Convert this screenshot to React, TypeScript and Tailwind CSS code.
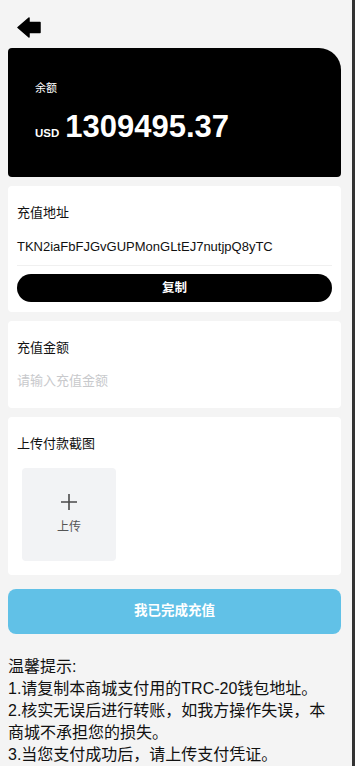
import React, { useState } from "react";

const font = { fontFamily: '"Liberation Sans", "Noto Sans CJK SC", sans-serif' };

function BackArrow() {
  return (
    <svg width="24" height="21" viewBox="0 0 24 21">
      <path
        d="M1 10.5 L12 1 L12 5.5 L23 5.5 L23 15.5 L12 15.5 L12 20 Z"
        fill="#000"
        stroke="#000"
        strokeWidth="1.5"
        strokeLinejoin="round"
      />
    </svg>
  );
}

export default function App() {
  const [amount, setAmount] = useState("");
  const address = "TKN2iaFbFJGvGUPMonGLtEJ7nutjpQ8yTC";

  return (
    <div className="flex min-h-[766px] bg-[#f4f4f4]" style={font}>
      <div className="flex-1 pl-2 pr-[3px]">
        <div className="h-12 flex items-center pl-[9px] pt-[6px]">
          <BackArrow />
        </div>

        {/* balance */}
        <div className="w-[333px] h-[129px] bg-black rounded-[4px] rounded-tr-[22px] pl-[27px] pt-[32px] text-white">
          <div className="text-[11px] leading-[16px]">余额</div>
          <div className="flex items-baseline mt-[14px]">
            <span className="text-[11.5px] font-bold mr-[6px]">USD</span>
            <span className="text-[31px] font-bold leading-[34px]">1309495.37</span>
          </div>
        </div>

        {/* address */}
        <div className="w-[333px] mt-[9px] bg-white rounded-[4px] px-[9px] pt-[18px] pb-[10px]">
          <div className="text-[13px] leading-[18px] text-[#111]">充值地址</div>
          <div className="mt-[16px] text-[13px] leading-[18px] text-[#111] pb-[9px] border-b border-[#f0f0f0]">
            {address}
          </div>
          <button className="mt-2 w-full h-[28px] bg-black rounded-full text-white text-[12.5px] font-bold">
            复制
          </button>
        </div>

        {/* amount */}
        <div className="w-[333px] mt-[9px] bg-white rounded-[4px] px-[9px] pt-[18px] pb-[18px]">
          <div className="text-[13px] leading-[18px] text-[#111]">充值金额</div>
          <input
            value={amount}
            onChange={(e) => setAmount(e.target.value)}
            placeholder="请输入充值金额"
            className="mt-[15px] block w-full h-[18px] text-[13px] outline-none placeholder-[#c8c9cc]"
          />
        </div>

        {/* upload */}
        <div className="w-[333px] mt-[9px] bg-white rounded-[4px] px-[9px] pt-[18px] pb-[14px]">
          <div className="text-[13px] leading-[18px] text-[#111]">上传付款截图</div>
          <div className="mt-[15px] ml-[5px] w-[94px] h-[93px] bg-[#f2f3f5] rounded-[4px] flex flex-col items-center pt-[26px]">
            <svg width="16" height="16" viewBox="0 0 16 16">
              <path d="M8 0 V16 M0 8 H16" stroke="#4a4a4a" strokeWidth="1.6" />
            </svg>
            <div className="mt-[9px] text-[12px] leading-[16px] text-[#555]">上传</div>
          </div>
        </div>

        <button className="mt-[14px] w-[333px] h-[45px] bg-[#61c1e7] rounded-[8px] text-white text-[13.5px] font-bold">
          我已完成充值
        </button>

        <div className="mt-[22px] text-[16px] leading-[22px] text-[#111] w-[333px]">
          <div>温馨提示:</div>
          <div>1.请复制本商城支付用的TRC-20钱包地址。</div>
          <div>2.核实无误后进行转账，如我方操作失误，本商城不承担您的损失。</div>
          <div>3.当您支付成功后，请上传支付凭证。</div>
        </div>
      </div>
      <div className="w-[3px] bg-[#333]" />
    </div>
  );
}
